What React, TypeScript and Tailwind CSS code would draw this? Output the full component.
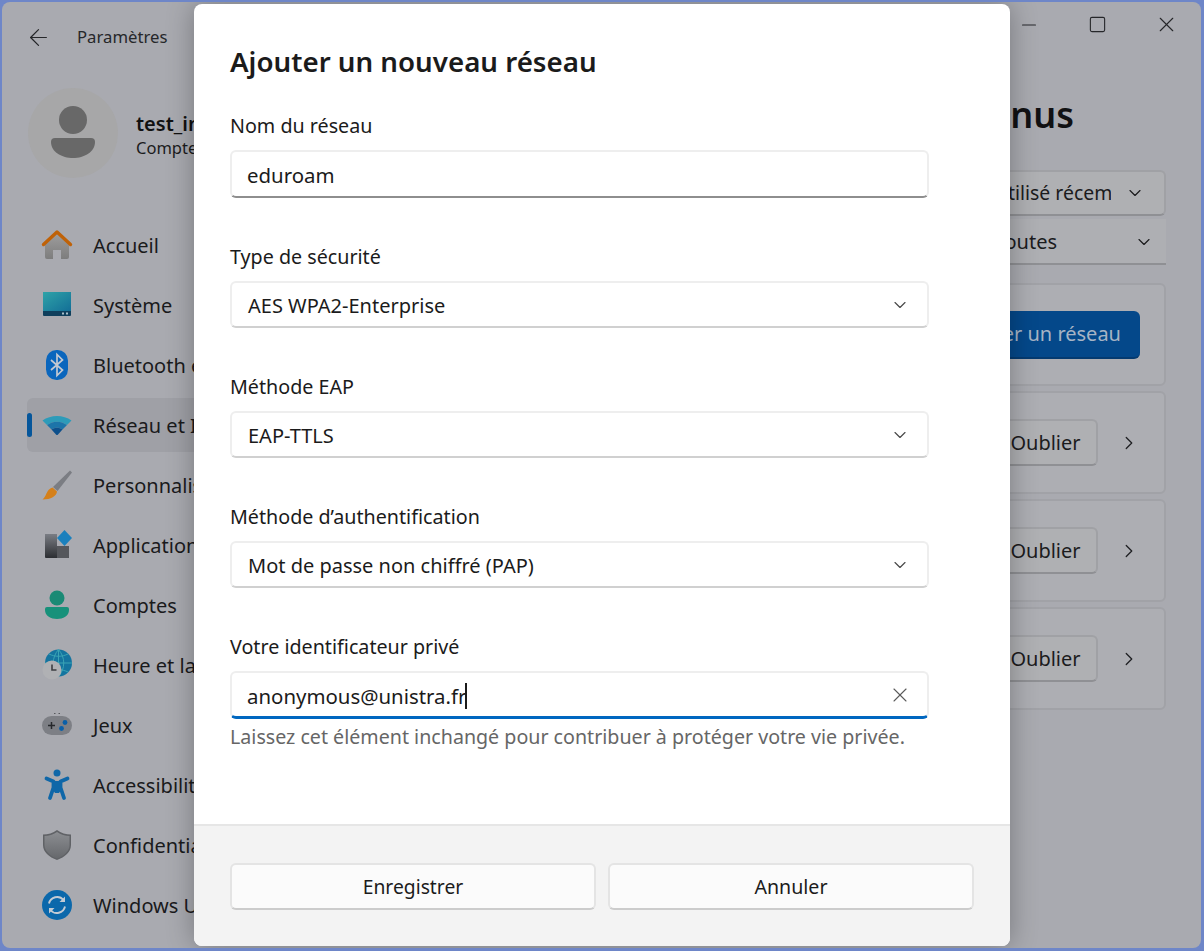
import React from 'react';
import { ArrowLeft, ChevronDown, ChevronRight, Minus, Square, X } from 'lucide-react';

function HomeIcon() {
  return (
    <svg width="32" height="32" viewBox="0 0 32 32">
      <defs>
        <linearGradient id="homeBody" x1="0" y1="0" x2="0" y2="1">
          <stop offset="0" stopColor="#a09f9f" />
          <stop offset="1" stopColor="#7d7d7d" />
        </linearGradient>
      </defs>
      <path d="M4 13 16 3l12 10v15a2 2 0 0 1-2 2h-6v-9h-8v9H6a2 2 0 0 1-2-2z" fill="url(#homeBody)" />
      <path d="M2.500 15.500 16 3l13.500 12.500" fill="none" stroke="#bf6208" strokeWidth="3.400" strokeLinecap="round" strokeLinejoin="round" />
    </svg>
  );
}

function SystemIcon() {
  return (
    <svg width="32" height="32" viewBox="0 0 32 32">
      <defs>
        <linearGradient id="sysScreen" x1="0" y1="0" x2="1" y2="1">
          <stop offset="0" stopColor="#2fa3a8" />
          <stop offset="1" stopColor="#136f97" />
        </linearGradient>
      </defs>
      <path d="M2 3h28v19H2z" fill="url(#sysScreen)" />
      <path d="M2 22h28v4a1 1 0 0 1-1 1H3a1 1 0 0 1-1-1z" fill="#0f3f5c" />
      <path d="M21 23.500h2v2h-2zM25 23.500h2v2h-2z" fill="#a8c0cc" />
    </svg>
  );
}

function BluetoothIcon() {
  return (
    <svg width="32" height="32" viewBox="0 0 32 32">
      <rect x="5" y="1" width="22" height="30" rx="10.500" fill="#0a66bd" />
      <path d="m10 11 11.500 10L16 26.500V5.500L21.500 11 10 21" fill="none" stroke="#c3c9d2" strokeWidth="1.700" />
    </svg>
  );
}

function WifiIcon() {
  return (
    <svg width="32" height="32" viewBox="0 0 32 32">
      <path d="M1.500 11.500C9.500 5.500 22.500 5.500 30.500 11.500L26 16C20 11.500 12 11.500 6 16z" fill="#2d9bb9" />
      <path d="M6 16C12 11.500 20 11.500 26 16L21.500 20.500C18 18 14 18 10.500 20.500z" fill="#1c74a9" />
      <path d="M10.500 20.500C14 18 18 18 21.500 20.500L17 25.500Q16 26.500 15 25.500z" fill="#0d4f8b" />
    </svg>
  );
}

function BrushIcon() {
  return (
    <svg width="32" height="32" viewBox="0 0 32 32">
      <path d="M29 1.500 31 3.500 16.500 22 12 18z" fill="#7b7d83" />
      <path d="M11.500 18.500 16 22.500C15.500 27 10 30.500 1.500 30.500 5.500 28 5 20.500 11.500 18.500z" fill="#d5801a" />
    </svg>
  );
}

function AppsIcon() {
  return (
    <svg width="32" height="32" viewBox="0 0 32 32">
      <defs>
        <linearGradient id="appsDark" x1="0" y1="0" x2="0" y2="1">
          <stop offset="0" stopColor="#7a7d84" />
          <stop offset="1" stopColor="#2c2e32" />
        </linearGradient>
      </defs>
      <path d="M4 5h12v12h12v11a1 1 0 0 1-1 1H5a1 1 0 0 1-1-1z" fill="url(#appsDark)" />
      <path d="M16 17h12v11a1 1 0 0 1-1 1H16z" fill="#55575c" />
      <path d="m23.500 1 7.500 8-7.500 8L16 9z" fill="#1a80bd" />
    </svg>
  );
}

function AccountIcon() {
  return (
    <svg width="32" height="32" viewBox="0 0 32 32">
      <circle cx="16" cy="9" r="7.500" fill="#1a8a75" />
      <path d="M6 18h20a2 2 0 0 1 2 2v1c0 6-6 9-12 9S4 27 4 21v-1a2 2 0 0 1 2-2z" fill="#17917a" />
    </svg>
  );
}

function TimeIcon() {
  return (
    <svg width="32" height="32" viewBox="0 0 32 32">
      <circle cx="17.500" cy="14" r="13.500" fill="#14749f" />
      <path d="M17.500 .5v27M4 14h27M8 5c6 3 13 3 19 0M8 23c6-3 13-3 19 0M17.500 .5c-7 8-7 19 0 27M17.500 .5c7 8 7 19 0 27" fill="none" stroke="#3aa4b5" strokeWidth="1" />
      <circle cx="11" cy="21" r="9.500" fill="#b0b1b4" />
      <path d="M11 15.500V21h4.500" fill="none" stroke="#3d3e42" strokeWidth="1.600" />
    </svg>
  );
}

function GameIcon() {
  return (
    <svg width="32" height="32" viewBox="0 0 32 32">
      <rect x="1" y="7" width="30" height="19" rx="9.500" fill="#7d7f85" />
      <path d="M7 16.500h7M10.500 13v7" stroke="#26282c" strokeWidth="1.500" />
      <circle cx="24" cy="13.500" r="2.400" fill="#0a5fa8" />
      <circle cx="20.500" cy="19.500" r="2.400" fill="#0a5fa8" />
      <path d="M13 4.500h1.500M17.500 4.500H19" stroke="#56585c" strokeWidth="1" />
    </svg>
  );
}

function AccessIcon() {
  return (
    <svg width="32" height="32" viewBox="0 0 32 32">
      <circle cx="16" cy="4" r="3.500" fill="#0f67a8" />
      <path d="M5.500 9.500 12.500 12.500v6l-3.500 10.500M26.500 9.500 19.500 12.500v6l3.500 10.500" fill="none" stroke="#0f67a8" strokeWidth="3.800" strokeLinecap="round" strokeLinejoin="round" />
      <path d="M12 12h8v9l-2 3h-4l-2-3z" fill="#0f67a8" />
    </svg>
  );
}

function ShieldIcon() {
  return (
    <svg width="32" height="32" viewBox="0 0 32 32">
      <defs>
        <linearGradient id="shieldFill" x1="0" y1="0" x2="0" y2="1">
          <stop offset="0" stopColor="#8b8d91" />
          <stop offset="1" stopColor="#66686c" />
        </linearGradient>
      </defs>
      <path d="M16 1c4 3 9 4.500 14 4.500V16c0 7-6 12-14 15C8 28 2 23 2 16V5.500C7 5.500 12 4 16 1z" fill="#606266" />
      <path d="M16 3c4 2.500 8 4 12.500 4v9c0 6-5.500 11-12.500 13.500C9 27 3.500 22 3.500 16V7C8 7 12 5.500 16 3z" fill="url(#shieldFill)" />
    </svg>
  );
}

function UpdateIcon() {
  return (
    <svg width="32" height="32" viewBox="0 0 32 32">
      <circle cx="16" cy="16" r="15" fill="#0b68ab" />
      <path d="M8 14.500a8.300 8.300 0 0 1 14.500-3.500M24 17.500a8.300 8.300 0 0 1-14.500 3.500" fill="none" stroke="#c3cbd4" strokeWidth="1.900" />
      <path d="M24 7.500V13h-5.500zM8 24.500V19h5.500z" fill="#c3cbd4" />
    </svg>
  );
}

const navItems = [
  { label: 'Accueil', icon: <HomeIcon /> },
  { label: 'Système', icon: <SystemIcon /> },
  { label: 'Bluetooth et appareils', icon: <BluetoothIcon /> },
  { label: 'Réseau et Internet', icon: <WifiIcon />, active: true },
  { label: 'Personnalisation', icon: <BrushIcon /> },
  { label: 'Applications', icon: <AppsIcon /> },
  { label: 'Comptes', icon: <AccountIcon /> },
  { label: 'Heure et langue', icon: <TimeIcon /> },
  { label: 'Jeux', icon: <GameIcon /> },
  { label: 'Accessibilité', icon: <AccessIcon /> },
  { label: 'Confidentialité et sécurité', icon: <ShieldIcon /> },
  { label: 'Windows Update', icon: <UpdateIcon /> },
];

function Sidebar() {
  return (
    <div className="w-[340px] shrink-0 pl-[25px]">
      {/* Title */}
      <div className="flex h-[70px] items-center">
        <ArrowLeft size={27} strokeWidth={1.100} className="ml-[-2px] text-[#26272a]" />
        <span className="ml-[25px] text-[16.700px] text-[#26272a]">Paramètres</span>
      </div>

      {/* Account */}
      <div className="mt-[16px] ml-[1px] flex items-center">
        <div className="flex h-[90px] w-[90px] items-center justify-center rounded-full bg-[#a7a7a8]">
          <svg width="46" height="54" viewBox="0 0 46 54">
            <circle cx="23" cy="14" r="14" fill="#686868" />
            <path d="M5 32h36a4 4 0 0 1 4 4c0 10-11 16-22 16S1 46 1 36a4 4 0 0 1 4-4z" fill="#686868" />
          </svg>
        </div>
        <div className="ml-[18px] pt-[2px] whitespace-nowrap">
          <div className="text-[20px] leading-[27px] font-semibold text-[#111]">test_intranet</div>
          <div className="text-[16.500px] leading-[22px] text-[#1b1b1c]">Compte local</div>
        </div>
      </div>

      {/* Nav */}
      <div className="mt-[40px] flex flex-col gap-[6px]">
        {navItems.map((item) => (
          <div
            key={item.label}
            className={
              item.active
                ? 'relative flex h-[54px] items-center rounded-[6px] bg-[#9fa0a6] pl-[14px]'
                : 'relative flex h-[54px] items-center pl-[14px]'
            }
          >
            {item.active && (
              <div className="absolute top-[15px] left-0 h-[24px] w-[5px] rounded-full bg-[#05569b]" />
            )}
            {item.icon}
            <span className="ml-[20px] pt-[2px] text-[20px] whitespace-nowrap text-[#1a1a1c]">{item.label}</span>
          </div>
        ))}
      </div>
    </div>
  );
}

function NetworkCard({ name }: { name: string }) {
  return (
    <div className="flex h-[103px] items-center justify-between rounded-[6px] border-2 border-[#a1a2a7] bg-[#adaeb3] pr-[24px] pl-[20px]">
      <span className="text-[20px] text-[#1a1a1c]">{name}</span>
      <div className="flex items-center">
        <button className="flex h-[47px] w-[105px] items-center justify-center rounded-[6px] border-2 border-[#a0a1a5] border-b-[#8f9094] bg-[#afb0b3] pt-[1px] text-[20px] text-[#1b1b1d]">
          Oublier
        </button>
        <ChevronRight size={22} strokeWidth={1.400} className="ml-[20px] text-[#1f2023]" />
      </div>
    </div>
  );
}

function Main() {
  return (
    <div className="min-w-0 flex-1 flex-col">
      {/* Window controls */}
      <div className="flex h-[45px] justify-end">
        <div className="flex w-[69px] items-center justify-center">
          <Minus size={22} strokeWidth={1.300} className="text-[#26272a]" />
        </div>
        <div className="flex w-[69px] items-center justify-center">
          <Square size={19} strokeWidth={1.400} className="text-[#26272a]" />
        </div>
        <div className="flex w-[69px] items-center justify-center">
          <X size={25} strokeWidth={1.100} className="text-[#26272a]" />
        </div>
      </div>

      <div className="pr-[35px]">
        <div className="mt-[43px] mr-[92px] text-right text-[36px] leading-[50px] font-semibold whitespace-nowrap text-[#111113]">
          Gérer les réseaux connus
        </div>

        {/* Sort */}
        <div className="mt-[30px] ml-auto flex h-[46px] w-[330px] items-center rounded-[6px] border-2 border-[#a0a1a5] border-b-[#8f9094] bg-[#afb0b3] pr-[19px] text-[19.400px] text-[#1b1b1d]">
          <span className="ml-[63px] w-[210px] overflow-hidden whitespace-nowrap">Trier par : Utilisé récemment</span>
          <ChevronDown size={20} strokeWidth={1.400} className="ml-auto" />
        </div>

        {/* Filter */}
        <div className="mt-[3px] flex h-[46px] items-center justify-end border-b-2 border-[#8f9094] bg-[#aeafb3] pt-[1px] pr-[12px] text-[20px] text-[#1b1b1d]">
          <span className="mr-[77px]">Filtrer par : Toutes</span>
          <ChevronDown size={20} strokeWidth={1.400} />
        </div>

        {/* Add */}
        <div className="mt-[18px] flex h-[103px] items-center justify-end rounded-[6px] border-2 border-[#a1a2a7] bg-[#adaeb3] pr-[24px]">
          <button className="flex h-[48px] items-center rounded-[6px] border-b-2 border-[#043a70] bg-[#04488a] px-[19px] pt-[1px] text-[20px] text-[#a7b4c5]">
            Ajouter un réseau
          </button>
        </div>

        {/* Known networks */}
        <div className="mt-[5px] flex flex-col gap-[5px]">
          <NetworkCard name="eduroam" />
          <NetworkCard name="Wi-Fi invité" />
          <NetworkCard name="osiris" />
        </div>
      </div>
    </div>
  );
}

function Field({ label, mb, children }: { label: string; mb: string; children: React.ReactNode }) {
  return (
    <div className={mb}>
      <div className="pt-[1px] text-[19.700px] leading-[28px] text-[#1b1b1b]">{label}</div>
      <div className="mt-[10px]">{children}</div>
    </div>
  );
}

function SelectBox({ value }: { value: string }) {
  return (
    <div className="flex h-[47px] w-[699px] items-center justify-between rounded-[6px] border-2 border-[#eeeeee] border-b-[#d0d0d0] bg-white pt-[2px] pr-[17px] pl-[16px] text-[20px] text-[#1b1b1b]">
      <span>{value}</span>
      <ChevronDown size={20} strokeWidth={1.400} className="mt-[-2px] text-[#4a4a4a]" />
    </div>
  );
}

function Dialog() {
  return (
    <div className="absolute top-[2px] left-[192px] flex h-[942px] w-[816px] flex-col overflow-hidden rounded-[8px] bg-white shadow-[0_0_28px_rgba(0,0,0,0.3)]">
      <div className="flex-1 px-[36px]">
        <div className="mt-[35px] text-[27.700px] leading-[44px] font-semibold text-[#1b1b1b]">Ajouter un nouveau réseau</div>

        <div className="mt-[28px]">
          <Field label="Nom du réseau" mb="mb-[44px]">
            <div className="flex h-[48px] w-[699px] items-center rounded-[6px] border-2 border-[#eeeeee] border-b-[#8e8e8e] bg-white pt-[2px] pl-[15px] text-[20.400px] text-[#1b1b1b]">
              eduroam
            </div>
          </Field>
          <Field label="Type de sécurité" mb="mb-[44px]">
            <SelectBox value="AES WPA2-Enterprise" />
          </Field>
          <Field label="Méthode EAP" mb="mb-[44px]">
            <SelectBox value="EAP-TTLS" />
          </Field>
          <Field label="Méthode d’authentification" mb="mb-[44px]">
            <SelectBox value="Mot de passe non chiffré (PAP)" />
          </Field>
          <Field label="Votre identificateur privé" mb="mb-0">
            <div className="flex h-[48px] w-[699px] items-center justify-between rounded-[6px] border-2 border-[#eeeeee] border-b-[3px] border-b-[#0067c0] bg-white pt-[4px] pr-[15px] pl-[15px] text-[20.400px] text-[#1b1b1b]">
              <span className="flex items-center">
                anonymous@unistra.fr
                <span className="ml-[-1px] inline-block h-[26px] w-[2px] bg-[#1b1b1b]" />
              </span>
              <X size={24} strokeWidth={1.100} className="mt-[-4px] text-[#5a5a5a]" />
            </div>
          </Field>
          <div className="mt-[4px] text-[19.650px] leading-[28px] text-[#666]">
            Laissez cet élément inchangé pour contribuer à protéger votre vie privée.
          </div>
        </div>
      </div>

      {/* Footer */}
      <div className="flex h-[122px] gap-[12px] border-t-2 border-[#e6e6e6] bg-[#f3f3f3] px-[36px] pt-[37px]">
        <button className="h-[47px] w-[366px] rounded-[6px] border-2 border-[#e4e4e4] border-b-[#cccccc] bg-[#fbfbfb] pt-[1px] text-[19.300px] text-[#1b1b1b]">
          Enregistrer
        </button>
        <button className="h-[47px] w-[366px] rounded-[6px] border-2 border-[#e4e4e4] border-b-[#cccccc] bg-[#fbfbfb] text-[19.600px] text-[#1b1b1b]">
          Annuler
        </button>
      </div>
    </div>
  );
}

export default function App() {
  return (
    <div className="h-[951px] w-[1204px] overflow-hidden bg-[#6e86c8] p-[2px] pr-[3px] font-['Noto_Sans',sans-serif]">
      <div className="relative flex h-[946px] overflow-hidden rounded-[8px] bg-[#a9aab0]">
        <Sidebar />
        <Main />
        <Dialog />
      </div>
    </div>
  );
}
